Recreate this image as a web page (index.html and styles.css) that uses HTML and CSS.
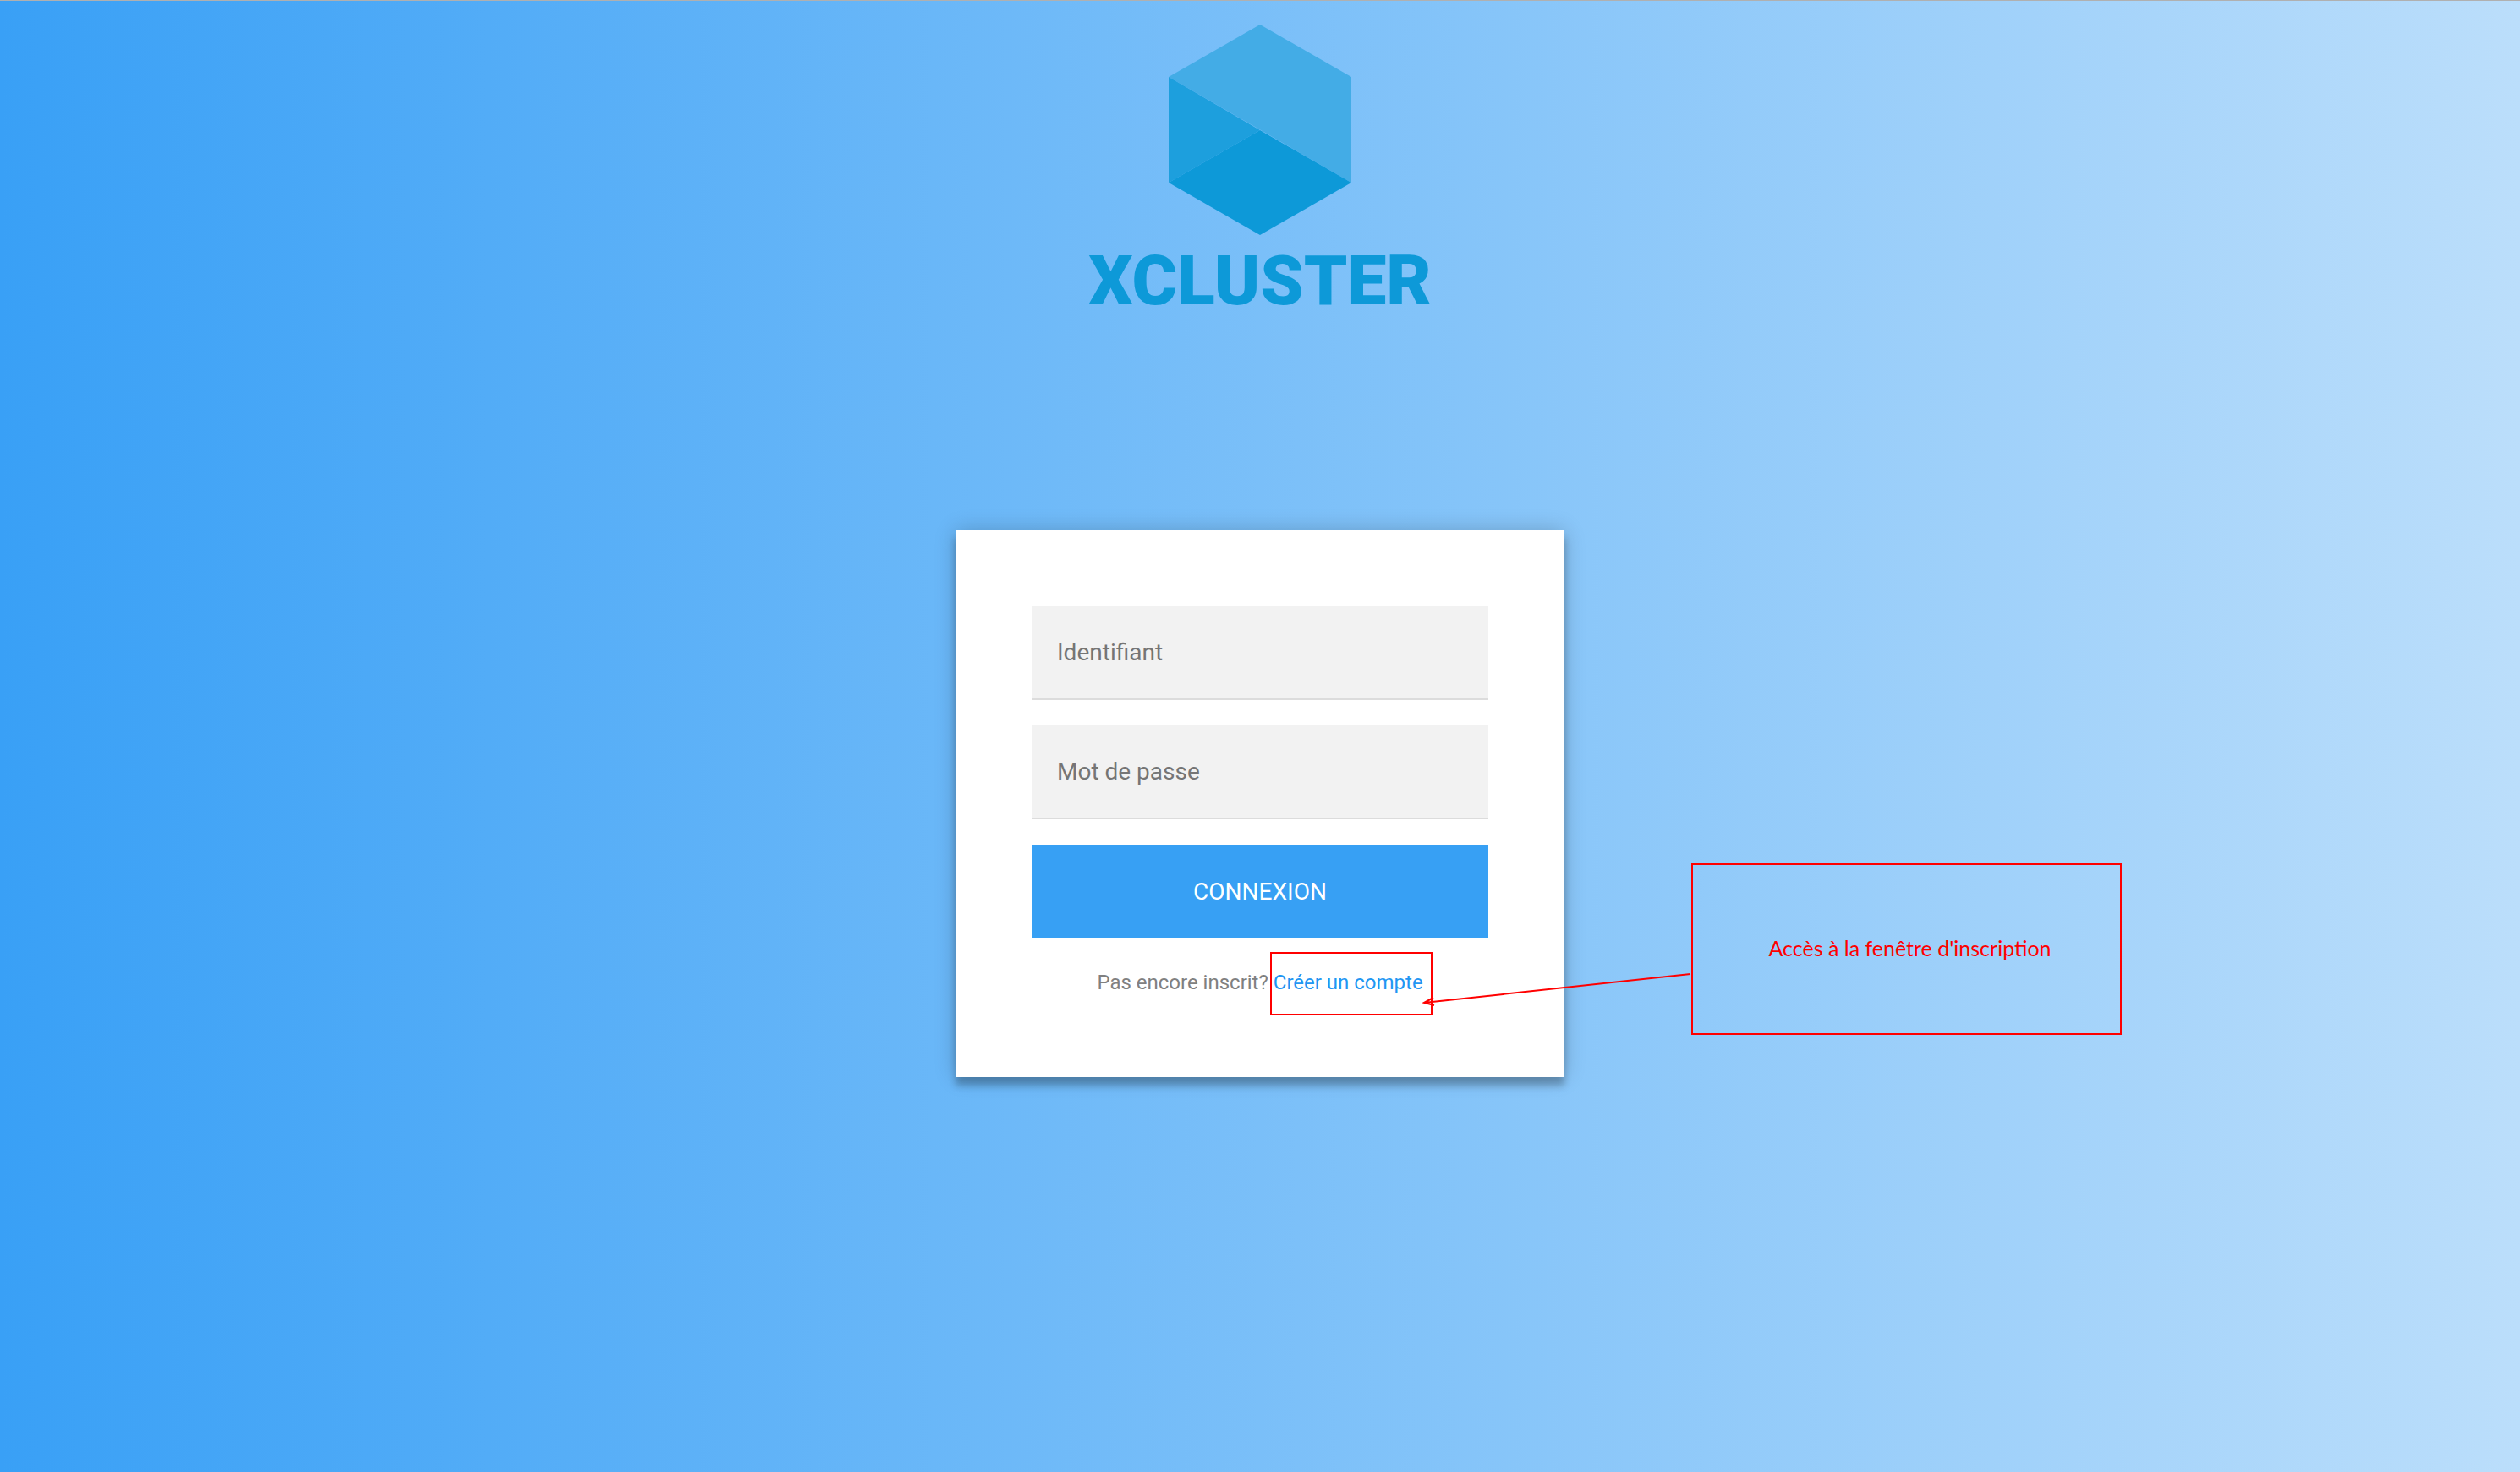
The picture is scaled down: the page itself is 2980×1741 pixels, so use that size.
FILE: index.html
```html
<!DOCTYPE html>
<html lang="fr">
<head>
  <meta charset="utf-8">
  <meta name="viewport" content="width=device-width, initial-scale=1">
  <title>XCLUSTER - Connexion</title>
  <link rel="stylesheet" href="styles.css">
</head>
<body>
  <header class="brand">
    <svg class="brand-mark" viewBox="0 0 216 249" aria-hidden="true">
      <path fill="#43ace6" d="M108 0 216 62V187L0 62Z"/>
      <path fill="#1d9fdd" d="M0 62 108 125 0 187Z"/>
      <path fill="#0d99d8" d="M108 125 216 187 108 249 0 187Z"/>
    </svg>
    <h1 class="brand-name">XCLUSTER</h1>
  </header>
  <main class="login">
    <form class="card">
      <input class="field" type="text" placeholder="Identifiant" aria-label="Identifiant">
      <input class="field" type="password" placeholder="Mot de passe" aria-label="Mot de passe">
      <button class="submit" type="submit">Connexion</button>
      <p class="message">Pas encore inscrit? <a class="signup" href="#inscription">Créer un compte</a></p>
    </form>
    <div class="highlight"></div>
    <svg class="arrow" viewBox="0 0 320 48" aria-hidden="true">
      <path d="M319 10 4 44M15 38 4 44 16 47"/>
    </svg>
    <aside class="callout">Accès à la fenêtre d'inscription</aside>
  </main>
</body>
</html>
```
FILE: styles.css
```css
* {
  box-sizing: border-box;
}

body {
  margin: 0;
  min-height: 100vh;
  border-top: 1px solid #b0b0b0;
  background: linear-gradient(to left, #bbdefb, #39a0f6);
  font-family: Roboto, sans-serif;
}

.brand {
  display: flex;
  flex-direction: column;
  align-items: center;
  padding-top: 28px;
}

.brand-mark {
  display: block;
  width: 216px;
  height: 249px;
}

.brand-name {
  margin: 12px 0 0;
  color: #0d99d8;
  font-size: 82px;
  font-weight: 900;
  line-height: 84px;
}

.login {
  position: relative;
  width: 720px;
  margin: 253px auto 0;
}

.card {
  display: flex;
  flex-direction: column;
  gap: 30px;
  padding: 90px;
  background: #fff;
  box-shadow: 0 0 24px rgba(0, 0, 0, 0.2), 0 10px 8px rgba(0, 0, 0, 0.24);
}

.field,
.submit {
  width: 100%;
  height: 111px;
  margin: 0;
  padding: 0 30px;
  border: 0;
  border-radius: 0;
  font: 28px Roboto, sans-serif;
}

.field {
  border-bottom: 2px solid #dcdcdc;
  background: #f2f2f2;
  color: #333;
}

.field::placeholder {
  color: #757575;
}

.submit {
  background: #37a0f4;
  color: #fff;
  text-transform: uppercase;
  cursor: pointer;
}

.message {
  margin: 0;
  color: #808080;
  font-size: 24px;
  line-height: 44px;
  text-align: center;
}

.signup {
  color: #2196f3;
  text-decoration: none;
}

/* Annotations laid over the form */
.highlight,
.arrow,
.callout {
  position: absolute;
}

.highlight {
  left: 372px;
  top: 499px;
  width: 192px;
  height: 75px;
  border: 2px solid #f00;
  pointer-events: none;
}

.arrow {
  left: 550px;
  top: 515px;
  width: 320px;
  height: 48px;
  overflow: visible;
  fill: none;
  stroke: #f00;
  stroke-width: 2;
  pointer-events: none;
}

.callout {
  display: flex;
  align-items: center;
  justify-content: center;
  left: 870px;
  top: 394px;
  width: 509px;
  height: 203px;
  padding: 0 0 4px 8px;
  border: 2px solid #f00;
  color: #f00;
  font: 25px Lato, sans-serif;
}
```
